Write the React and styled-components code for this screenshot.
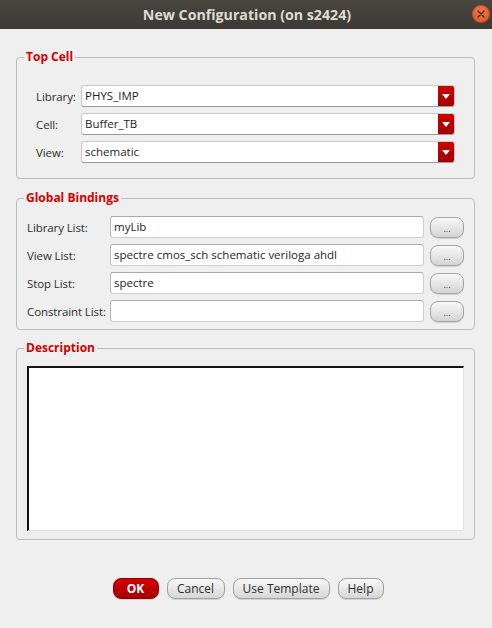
import React from 'react'
import styled, { createGlobalStyle } from 'styled-components';

const GlobalStyle = createGlobalStyle`
    html, body {
        margin: 0;
        padding: 0;
        background: #efefef;
    }
    body {
        font-family: "Open Sans", "Noto Sans", sans-serif;
    }
`;

const topCellRows = [
    { label: 'Library:', value: 'PHYS_IMP' },
    { label: 'Cell:', value: 'Buffer_TB' },
    { label: 'View:', value: 'schematic' },
];

const bindingRows = [
    { label: 'Library List:', value: 'myLib' },
    { label: 'View List:', value: 'spectre cmos_sch schematic veriloga ahdl' },
    { label: 'Stop List:', value: 'spectre' },
    { label: 'Constraint List:', value: '' },
];

function App() {
    return (
        <Window>
            <GlobalStyle />
            <TitleBar>
                <h1>New Configuration (on s2424)</h1>
                <CloseButton>
                    <svg width="8" height="8" viewBox="0 0 8 8">
                        <path d="M1 1 L7 7 M7 1 L1 7" stroke="#3a2a20" strokeWidth="1.4" strokeLinecap="round" />
                    </svg>
                </CloseButton>
            </TitleBar>
            <Body>
                <Group $padTop={21} $padBottom={15} $padX={19}>
                    <legend>Top Cell</legend>
                    <Rows>
                        {topCellRows.map((row) => (
                            <Row key={row.label} $labelWidth={45}>
                                <span>{row.label}</span>
                                <Combo>
                                    <div className="value">{row.value}</div>
                                    <div className="arrow">
                                        <svg width="8" height="5" viewBox="0 0 8 5">
                                            <path d="M0 0 H8 L4 5 Z" fill="#fff" />
                                        </svg>
                                    </div>
                                </Combo>
                            </Row>
                        ))}
                    </Rows>
                </Group>
                <Group $padTop={11} $padBottom={7} $padX={10} $gap={12}>
                    <legend>Global Bindings</legend>
                    <Rows>
                        {bindingRows.map((row) => (
                            <Row key={row.label} $labelWidth={83}>
                                <span>{row.label}</span>
                                <TextField>{row.value}</TextField>
                                <BrowseButton>...</BrowseButton>
                            </Row>
                        ))}
                    </Rows>
                </Group>
                <Group $padTop={11} $padBottom={8} $padX={10} $gap={11}>
                    <legend>Description</legend>
                    <Description />
                </Group>
                <ButtonRow>
                    <DialogButton $primary $width={46}>OK</DialogButton>
                    <DialogButton $width={58}>Cancel</DialogButton>
                    <DialogButton $width={97}>Use Template</DialogButton>
                    <DialogButton $width={46}>Help</DialogButton>
                </ButtonRow>
            </Body>
        </Window>
    )
}

const Window = styled.div`
    width: 492px;
    height: 628px;
    display: flex;
    flex-direction: column;
    background: #efefef;
    overflow: hidden;
`;

const TitleBar = styled.div`
    height: 29px;
    flex-shrink: 0;
    display: flex;
    align-items: center;
    justify-content: center;
    position: relative;
    background: linear-gradient(#47463f, #3b3a35);
    h1 {
        margin: 0 0 0 2px;
        font-size: 14.2px;
        font-weight: 700;
        color: #dfdbd2;
    }
`;

const CloseButton = styled.div`
    position: absolute;
    right: 2px;
    top: 5px;
    width: 18px;
    height: 18px;
    border-radius: 50%;
    background: radial-gradient(circle at 50% 35%, #f47a4c, #dd4f1e);
    box-shadow: inset 0 0 0 1px rgba(120, 40, 10, 0.35);
    display: flex;
    align-items: center;
    justify-content: center;
`;

const Body = styled.div`
    flex: 1;
    display: flex;
    flex-direction: column;
    padding: 21px 17px 0 16px;
`;

const Group = styled.fieldset`
    margin: ${(p) => p.$gap || 0}px 0 0 0;
    padding: ${(p) => p.$padTop}px ${(p) => p.$padX}px ${(p) => p.$padBottom}px;
    border: 1px solid #bcbcbc;
    border-radius: 4px;
    min-width: 0;
    legend {
        margin-left: ${(p) => 7 - p.$padX}px;
        padding: 0 2px;
        font-size: 12px;
        line-height: 14px;
        font-weight: 700;
        color: #d40000;
    }
`;

const Rows = styled.div`
    display: flex;
    flex-direction: column;
    gap: 6px;
`;

const Row = styled.div`
    display: flex;
    align-items: center;
    height: 22px;
    font-size: 11.5px;
    color: #2e2e2e;
    span {
        width: ${(p) => p.$labelWidth}px;
        flex-shrink: 0;
        white-space: nowrap;
        letter-spacing: -0.1px;
    }
`;

const Combo = styled.div`
    flex: 1;
    height: 22px;
    box-sizing: border-box;
    display: flex;
    background: #fff;
    border: 1px solid #c9c9c9;
    border-bottom-color: #999;
    border-radius: 3px;
    overflow: hidden;
    .value {
        flex: 1;
        padding-left: 3px;
        line-height: 20px;
        color: #1e1e1e;
    }
    .arrow {
        width: 16px;
        display: flex;
        align-items: center;
        justify-content: center;
        background: linear-gradient(#d00000, #a00000);
    }
`;

const TextField = styled.div`
    flex: 1;
    height: 22px;
    box-sizing: border-box;
    padding-left: 3px;
    line-height: 20px;
    background: #fff;
    border: 1px solid #cfcfcf;
    border-top-color: #a8a8a8;
    border-left-color: #b8b8b8;
    border-radius: 3px;
    color: #1e1e1e;
    white-space: nowrap;
    overflow: hidden;
`;

const BrowseButton = styled.div`
    width: 34px;
    height: 21px;
    margin-left: 6px;
    box-sizing: border-box;
    border: 1px solid #a4a4a4;
    border-radius: 8px;
    background: linear-gradient(#f8f8f8, #d4d4d4);
    box-shadow: 0 1px 0 rgba(0, 0, 0, 0.12);
    display: flex;
    align-items: center;
    justify-content: center;
    font-size: 9px;
    line-height: 1;
    padding-top: 3px;
    color: #333;
`;

const Description = styled.div`
    height: 165px;
    box-sizing: border-box;
    background: #fff;
    border-top: 2px solid #151515;
    border-left: 2px solid #151515;
    border-right: 1px solid #e2e2e2;
    border-bottom: 1px solid #e2e2e2;
`;

const ButtonRow = styled.div`
    display: flex;
    justify-content: center;
    gap: 8px;
    margin-top: 38px;
    padding-left: 5px;
`;

const DialogButton = styled.div`
    width: ${(p) => p.$width}px;
    height: 21px;
    box-sizing: border-box;
    display: flex;
    align-items: center;
    justify-content: center;
    border-radius: 8px;
    font-size: 12px;
    border: 1px solid ${(p) => (p.$primary ? '#8a0000' : '#a0a0a0')};
    background: ${(p) => (p.$primary ? 'linear-gradient(#d40000, #a80000)' : 'linear-gradient(#f9f9f9, #d6d6d6)')};
    color: ${(p) => (p.$primary ? '#fff' : '#2e2e2e')};
    font-weight: ${(p) => (p.$primary ? 700 : 400)};
    box-shadow: 0 1px 0 rgba(0, 0, 0, 0.12);
`;

export default App
